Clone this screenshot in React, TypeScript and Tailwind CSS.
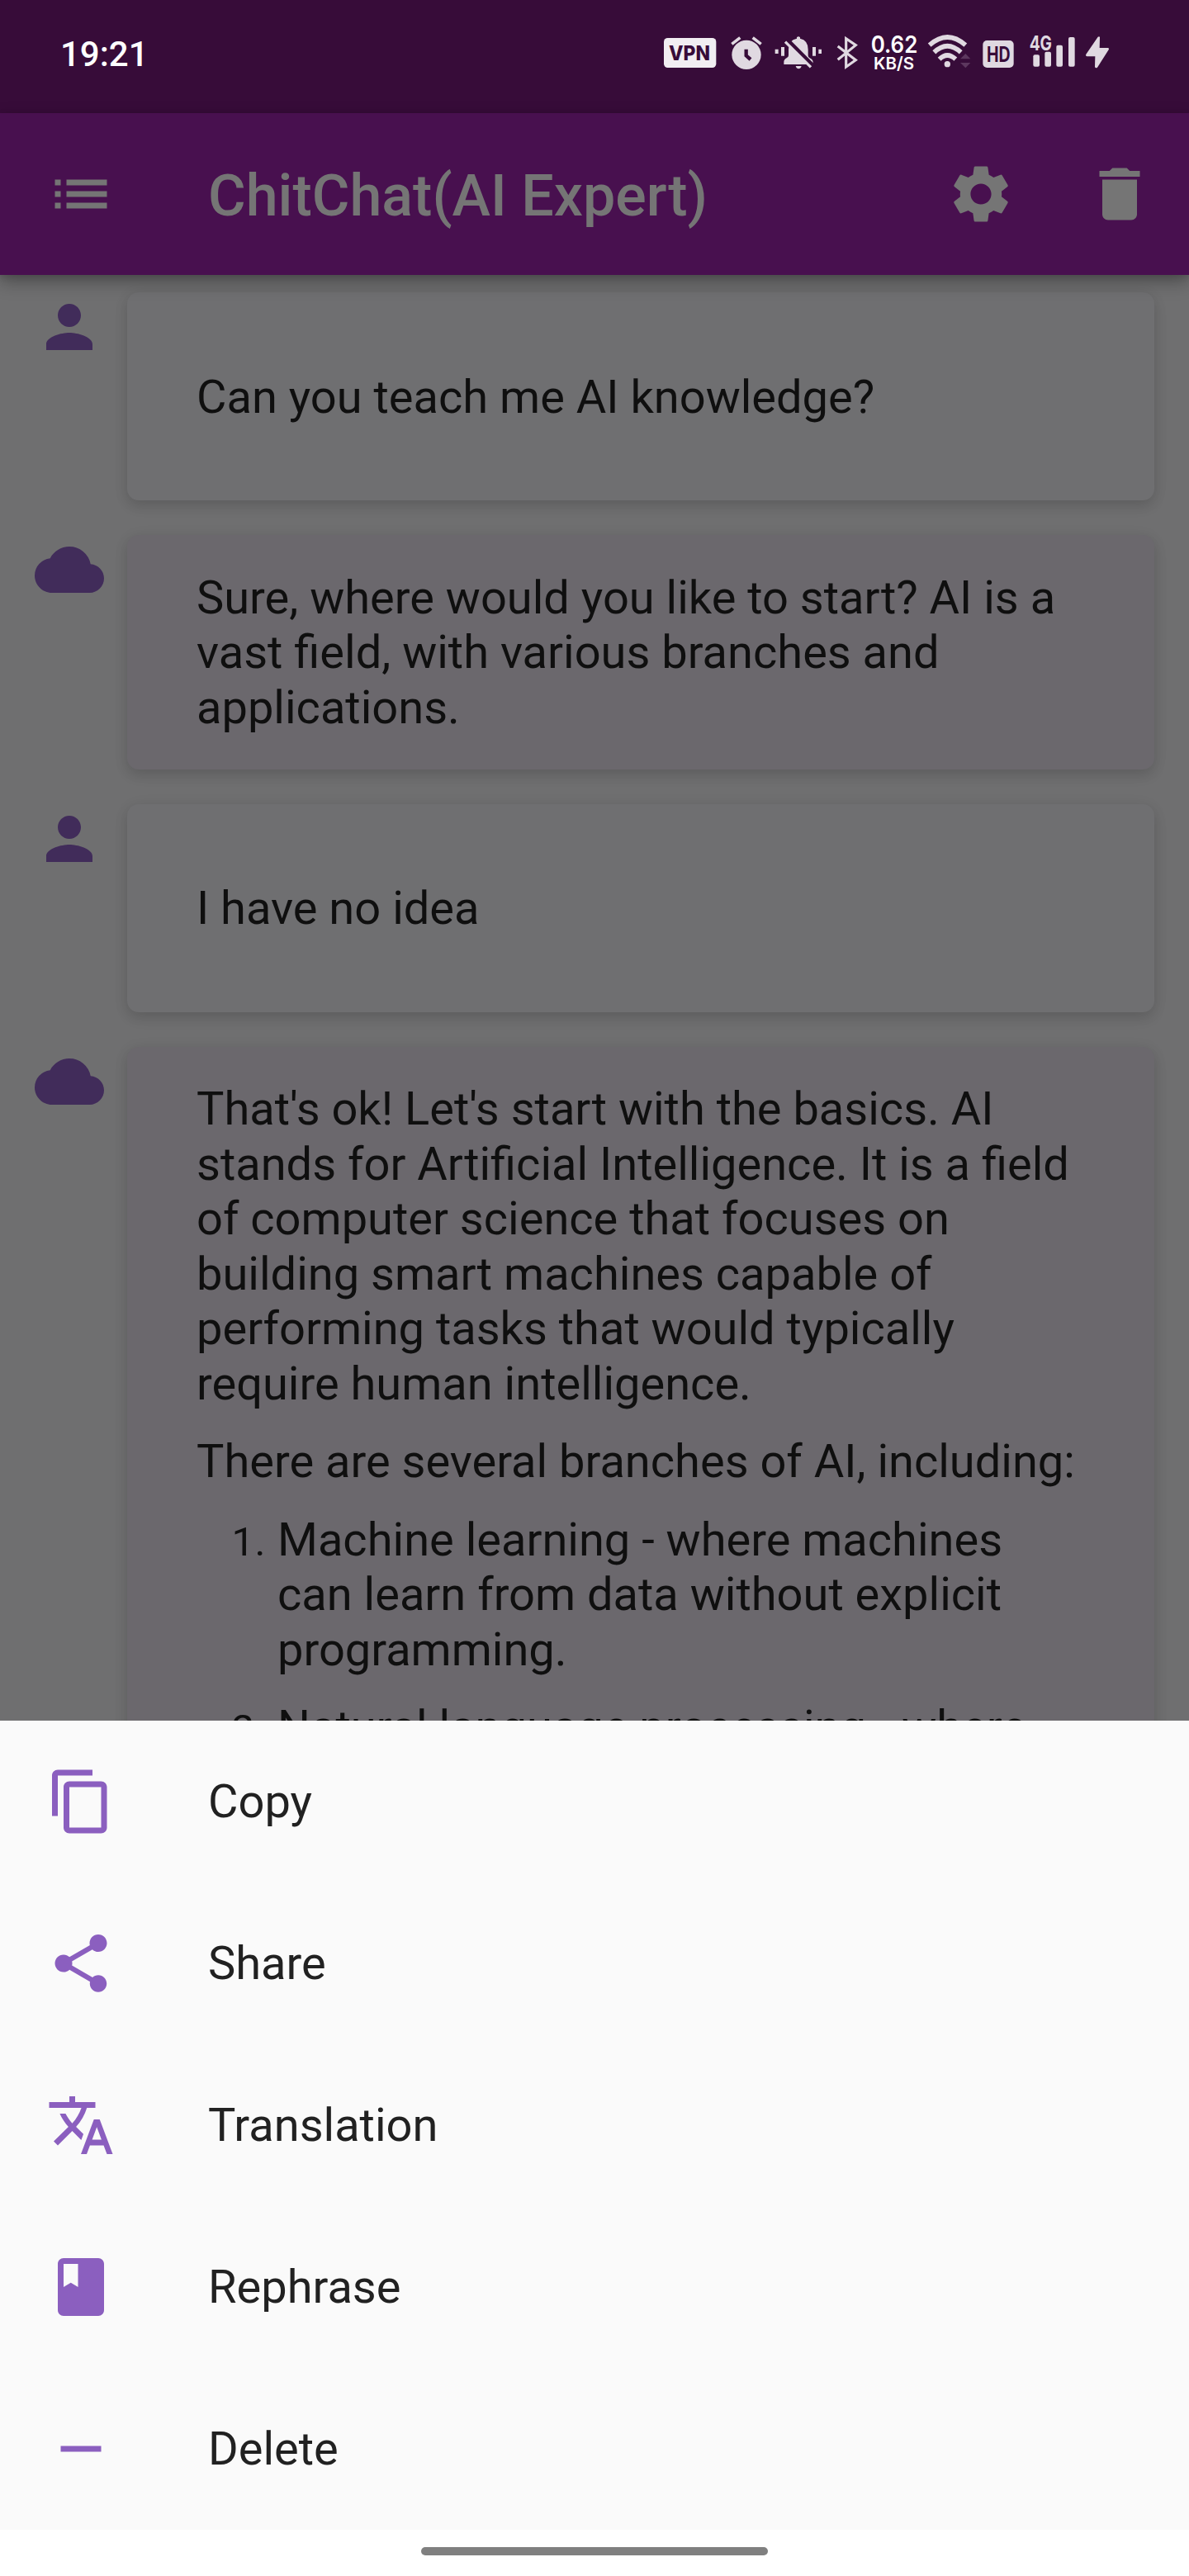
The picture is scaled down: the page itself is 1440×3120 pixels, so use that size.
import type { ReactNode } from "react";
import {
  MdBook,
  MdCloud,
  MdContentCopy,
  MdDelete,
  MdList,
  MdPerson,
  MdRemove,
  MdSettings,
  MdShare,
  MdTranslate,
} from "react-icons/md";

const BAR = "#370c39";

function StatusIcons() {
  return (
    <div className="flex h-[45px] items-start text-[#e0d9e1]">
      {/* VPN */}
      <svg className="h-[45px] w-[64px] overflow-visible" viewBox="72 60 192 135">
        <rect x="72" y="78" width="190" height="108" rx="14" fill="#f1eef2" />
        <text x="165" y="160" textAnchor="middle" textLength="150" lengthAdjust="spacingAndGlyphs" fontFamily="Inter" fontWeight="800" fontSize="75" fill={BAR}>
          VPN
        </text>
      </svg>
      {/* Alarm */}
      <svg className="ml-[17px] h-[45px] w-[38px]" viewBox="315 60 114 135">
        <circle cx="372" cy="139" r="53" fill="currentColor" />
        <path d="M319 100 349 77M395 77 425 100" stroke="currentColor" strokeWidth="11" />
        <path d="M371 119V142L387 156" fill="none" stroke={BAR} strokeWidth="13" />
      </svg>
      {/* Muted bell with vibration */}
      <svg className="ml-[15px] h-[45px] w-[58px]" viewBox="474 60 174 135">
        <path
          fill="currentColor"
          d="M476 119h12v16h-12zM498 111h12v32h-12zM612 111h12v32h-12zM634 119h11v16h-11zM555 76q6-6 12 0v4q29 6 29 40v22q0 6 6 9 12 5 12 16v7H508v-8q0-11 11-16 6-3 6-9v-22q0-34 30-39zM551 180h21q-3 10-10.500 10T551 180z"
        />
        <path d="M520 84 614 178" stroke={BAR} strokeWidth="14" />
        <path d="M513 92 606 184" stroke="currentColor" strokeWidth="10" />
      </svg>
      {/* Bluetooth */}
      <svg className="ml-[17px] h-[45px] w-[26px]" viewBox="699 60 78 135">
        <path d="M704 108 769 158 734 183V80L769 104 704 157" fill="none" stroke="currentColor" strokeWidth="9.500" />
      </svg>
      {/* Network speed */}
      <svg className="ml-[15px] h-[45px] w-[58px] overflow-visible" viewBox="822 60 174 135">
        <g fill="#fff" fontFamily="Inter" fontWeight="600">
          <text x="824" y="133" fontSize="86" textLength="170" lengthAdjust="spacingAndGlyphs">0.62</text>
          <text x="834" y="192" fontSize="62" textLength="147" lengthAdjust="spacingAndGlyphs">KB/S</text>
        </g>
      </svg>
      {/* Wi-Fi */}
      <svg className="ml-[11px] h-[45px] w-[53px]" viewBox="159 60 159 135">
        <g fill="none" stroke="currentColor" strokeWidth="17">
          <path d="M167 104Q232 46 298 104" />
          <path d="M184 130Q232 84 281 130" />
          <path d="M203 155Q232 127 262 155" />
        </g>
        <circle cx="232" cy="173" r="11" fill="currentColor" />
        <path d="M298 135 316 154H279zM279 168H316L298 187z" fill="#5c375e" />
      </svg>
      {/* HD */}
      <svg className="ml-[14px] h-[45px] w-[38px] overflow-visible" viewBox="360 60 114 135">
        <rect x="361" y="87" width="112" height="99" rx="15" fill="currentColor" />
        <text x="418" y="164" textAnchor="middle" textLength="86" lengthAdjust="spacingAndGlyphs" fontFamily="Inter" fontWeight="700" fontSize="77" fill={BAR}>
          HD
        </text>
      </svg>
      {/* Signal */}
      <svg className="ml-[18px] h-[45px] w-[57px] overflow-visible" viewBox="528 60 171 135">
        <g fill="currentColor">
          <text x="530" y="123" textLength="82" lengthAdjust="spacingAndGlyphs" fontFamily="Inter" fontWeight="700" fontSize="72">
            4G
          </text>
          <rect x="544" y="139" width="23" height="43" rx="6" />
          <rect x="586" y="128" width="23" height="54" rx="6" />
          <rect x="628" y="104" width="23" height="78" rx="6" />
          <rect x="672" y="75" width="23" height="107" rx="6" />
        </g>
      </svg>
      {/* Charging */}
      <svg className="ml-[11px] h-[45px] w-[30px]" viewBox="732 60 90 135">
        <path d="M779 74q6-4 7 2l-1 38h30q6 1 3 7l-41 64q-7 4-9-2l1-38h-29q-7-2-4-8z" fill="currentColor" />
      </svg>
    </div>
  );
}

function Message({ from, children }: { from: "user" | "bot"; children: ReactNode }) {
  const bot = from === "bot";
  const Icon = bot ? MdCloud : MdPerson;
  return (
    <div className="flex items-start gap-[28px]">
      <Icon className="size-[84px] shrink-0 text-[#412c5a]" />
      <div
        className={
          "flex min-h-[252px] w-[1244px] flex-col justify-center gap-[28px] rounded-[14px] px-[84px] shadow-[0_7px_16px_rgba(0,0,0,0.11),0_3px_20px_rgba(0,0,0,0.06)] " +
          (bot ? "bg-[#6b686d] pt-[42.7px] pb-[41.4px]" : "bg-[#6f6f71] pt-[43.05px] pb-[40.95px]")
        }
      >
        {children}
      </div>
    </div>
  );
}

function ListItem({ n, lines }: { n: number; lines: string[] }) {
  return (
    <div className="flex items-baseline">
      <span className="w-[98px] shrink-0 pr-[14px] text-right text-[49px] tracking-[0.5px]">{n}.</span>
      <Lines lines={lines} />
    </div>
  );
}

function Lines({ lines }: { lines: string[] }) {
  return (
    <p>
      {lines.map((line) => (
        <span key={line} className="block whitespace-nowrap">
          {line}
        </span>
      ))}
    </p>
  );
}

const actions = [
  { label: "Copy", Icon: MdContentCopy },
  { label: "Share", Icon: MdShare },
  { label: "Translation", Icon: MdTranslate },
  { label: "Rephrase", Icon: MdBook },
  { label: "Delete", Icon: MdRemove },
];

export default function App() {
  return (
    <div className="flex h-[3120px] w-[1440px] flex-col overflow-hidden bg-[#6f6f70] font-['Roboto',sans-serif]">
      <div className="flex h-[137px] shrink-0 items-start justify-between bg-[#370c39] pr-[96px] pl-[73px]">
        <span className="pt-[41px] text-[42px] leading-[50px] font-medium text-white">19:21</span>
        <div className="pt-[40px]">
          <StatusIcons />
        </div>
      </div>

      <header className="relative z-10 flex h-[196px] shrink-0 items-center bg-[#48104f] pr-[42px] pl-[56px] text-[#757575] shadow-[0_8px_20px_rgba(0,0,0,0.32),0_2px_8px_rgba(0,0,0,0.1)]">
        <MdList className="size-[84px]" />
        <h1 className="ml-[112px] flex-1 pt-[4px] text-[70px] leading-[84px] font-medium">ChitChat(AI Expert)</h1>
        <MdSettings className="size-[84px]" />
        <MdDelete className="ml-[84px] size-[84px]" />
      </header>

      <main className="flex h-[1751px] shrink-0 flex-col gap-[42px] overflow-hidden pt-[21px] pl-[42px] text-[56px] leading-[66.5px] text-[#0f0f0f]">
        <Message from="user">
          <Lines lines={["Can you teach me AI knowledge?"]} />
        </Message>
        <Message from="bot">
          <Lines lines={["Sure, where would you like to start? AI is a", "vast field, with various branches and", "applications."]} />
        </Message>
        <Message from="user">
          <Lines lines={["I have no idea"]} />
        </Message>
        <Message from="bot">
          <Lines
            lines={[
              "That's ok! Let's start with the basics. AI",
              "stands for Artificial Intelligence. It is a field",
              "of computer science that focuses on",
              "building smart machines capable of",
              "performing tasks that would typically",
              "require human intelligence.",
            ]}
          />
          <Lines lines={["There are several branches of AI, including:"]} />
          <ListItem n={1} lines={["Machine learning - where machines", "can learn from data without explicit", "programming."]} />
          <ListItem n={2} lines={["Natural language processing - where"]} />
        </Message>
      </main>

      <section className="flex shrink-0 flex-col bg-[#fafafa] text-[#212121]">
        {actions.map(({ label, Icon }) => (
          <button key={label} className="flex h-[196px] items-center gap-[112px] pl-[56px] text-left">
            <Icon className="size-[84px] text-[#8b5fbf]" />
            <span className="text-[56px] leading-[66.5px]">{label}</span>
          </button>
        ))}
      </section>

      <div className="flex h-[56px] shrink-0 justify-center bg-white pt-[21px]">
        <div className="h-[10px] w-[420px] rounded-full bg-[#808080]" />
      </div>
    </div>
  );
}
